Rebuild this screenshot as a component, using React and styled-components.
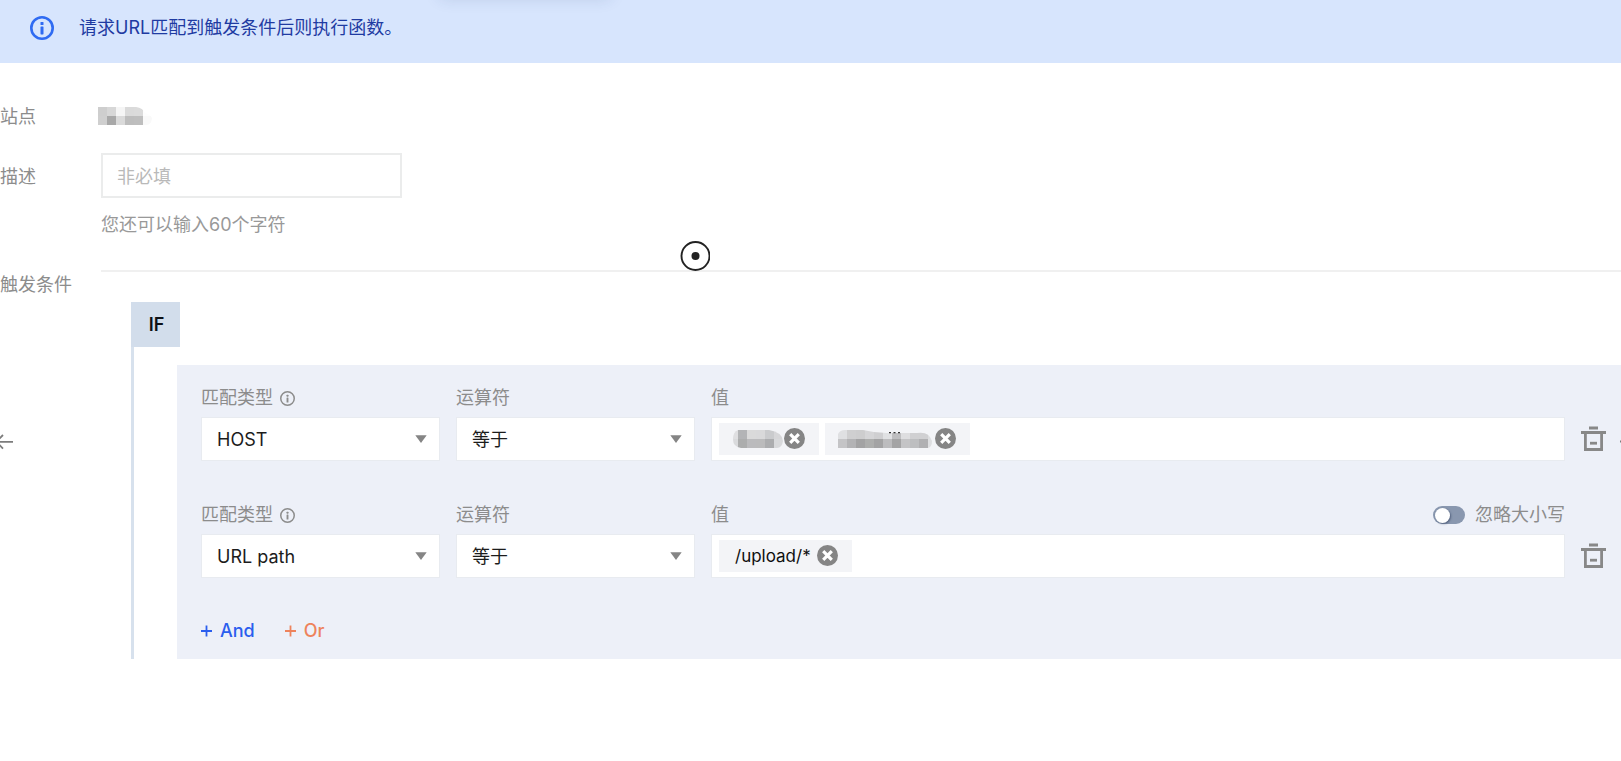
import React, { useState } from 'react';
import styled, { createGlobalStyle } from 'styled-components';

const GlobalStyle = createGlobalStyle`
    * {
        box-sizing: border-box;
    }

    body {
        margin: 0;
        background-color: #fff;
    }

    body, button, input, select {
        font-family: Inter, "Noto Sans CJK SC", sans-serif;
        font-size: 18px;
        line-height: 24px;
    }
`;

const Page = styled.main`
    position: relative;
    min-height: 100vh;
    overflow: hidden;
    color: #8c8c8c;
`;

/* only the shadow of the message reaches into the page */
const TopMessage = styled.div`
    position: absolute;
    top: -22px;
    left: 440px;
    width: 170px;
    height: 20px;
    box-shadow: 0 0 16px rgba(40, 60, 110, 0.16);
`;

const Banner = styled.div`
    display: flex;
    align-items: center;
    gap: 25px;
    padding: 16px 30px 23px;
    background-color: #d7e5fd;
    color: #2f6bf2;
`;

const BannerText = styled.p`
    margin: 0;
    color: #1f3ba2;
`;

const Form = styled.form`
    padding-top: 42px;
`;

const FormRow = styled.div`
    display: grid;
    grid-template-columns: 101px 1fr;
    margin-bottom: ${(props) => props.$space || 0}px;
`;

const RowLabel = styled.label`
    white-space: nowrap;
    padding-top: ${(props) => props.$top || 0}px;
`;

const SiteValue = styled.div`
    display: flex;
    align-items: center;
    margin-left: -3px;
    padding-bottom: 2px;
`;

const Control = styled.div`
    display: flex;
    flex-direction: column;
    align-items: flex-start;
    gap: 15px;
`;

const TextInput = styled.input`
    width: 301px;
    height: 45px;
    padding: 1px 14px 0;
    border: 2px solid #ebecec;
    background-color: #fff;
    color: #1f1f1f;
    outline: none;

    &::placeholder {
        color: #b9b9b9;
        opacity: 1;
    }
`;

const Hint = styled.span`
    color: #999;
`;

const Rules = styled.section`
    border-top: 2px solid #f0f0f0;
    padding: 30px 0 0 30px;
`;

const Branch = styled.div`
    border-left: 3px solid #d7e1ed;
`;

const IfBadge = styled.div`
    display: flex;
    align-items: center;
    justify-content: center;
    width: 49px;
    height: 45px;
    margin-left: -3px;
    margin-bottom: 18px;
    padding-left: 2px;
    background-color: #d2ddeb;
    color: #0d1016;
    font-weight: 600;
`;

const Panel = styled.div`
    display: flex;
    flex-direction: column;
    gap: 41px;
    margin-left: 43px;
    padding: 20px 15px 16px 24px;
    background-color: #edf0f8;
`;

const Condition = styled.div`
    display: grid;
    grid-template-columns: 239px 239px 1fr 25px;
    column-gap: 16px;
    align-items: end;
`;

const Field = styled.div`
    display: flex;
    flex-direction: column;
    gap: 7px;
    min-width: 0;
`;

const FieldHead = styled.div`
    display: flex;
    align-items: center;
    justify-content: space-between;
    height: 25px;
    padding-top: 1px;
`;

const FieldLabel = styled.label`
    display: flex;
    align-items: center;
    gap: 7px;
`;

const SelectBox = styled.div`
    position: relative;

    svg {
        position: absolute;
        top: 18px;
        right: 13px;
        pointer-events: none;
    }
`;

const Select = styled.select`
    display: block;
    width: 100%;
    height: 44px;
    padding: 1px 32px 0 15px;
    border: 1px solid #e8ebf0;
    border-radius: 0;
    background-color: #fff;
    color: #1c1c1c;
    appearance: none;
    outline: none;
`;

const ValueBox = styled.div`
    display: flex;
    align-items: center;
    gap: 6px;
    height: 44px;
    padding: 0 7px;
    border: 1px solid #e8ebf0;
    background-color: #fff;
`;

const Tag = styled.span`
    display: flex;
    align-items: center;
    gap: 4px;
    height: 32px;
    padding: 0 14px 1px;
    background-color: #f3f4f7;
    color: #0f0f0f;
    font-size: 17px;
`;

const TagText = styled.span`
    padding: 1px 2px 0;
`;

const IconButton = styled.button`
    display: flex;
    align-items: center;
    justify-content: center;
    height: ${(props) => props.$height}px;
    padding: 0;
    border: none;
    background: none;
    color: #888;
    cursor: pointer;
`;

const TagInput = styled.input`
    flex: 1;
    min-width: 0;
    height: 32px;
    border: none;
    background: transparent;
    outline: none;
`;

const SwitchLabel = styled.label`
    display: flex;
    align-items: center;
    gap: 10px;
`;

const Switch = styled.input`
    display: flex;
    align-items: center;
    width: 32px;
    height: 18px;
    margin: 0;
    padding: 0 2px;
    border-radius: 9px;
    background-color: ${(props) => (props.checked ? '#2b62f0' : '#8997af')};
    justify-content: ${(props) => (props.checked ? 'flex-end' : 'flex-start')};
    appearance: none;

    &::before {
        content: '';
        width: 15px;
        height: 15px;
        border-radius: 50%;
        background-color: #fff;
        box-shadow: 1px 1px 2px rgba(30, 45, 80, 0.5);
    }
`;

const Actions = styled.div`
    display: flex;
    gap: 30px;
`;

const AddButton = styled.button`
    display: flex;
    align-items: center;
    gap: 8px;
    padding: 0;
    border: none;
    background: none;
    color: ${(props) => (props.$kind === 'or' ? '#ee835c' : '#2b5eee')};
    font-weight: 500;
    cursor: pointer;
`;

const Pointer = styled.div`
    position: absolute;
    top: 241px;
    left: 680px;
    width: 30px;
    height: 30px;
`;

const SlideButton = styled.button`
    position: absolute;
    top: 429px;
    ${(props) => props.$side}: ${(props) => props.$offset}px;
    display: flex;
    width: 24px;
    height: 24px;
    padding: 0;
    border: none;
    background: none;
    color: #7c7c7c;
`;

const InfoIcon = ({ size, stroke }) => (
    <svg width={size} height={size} viewBox="0 0 24 24" fill="none" aria-hidden="true">
        <circle cx="12" cy="12" r={12 - stroke / 2} stroke="currentColor" strokeWidth={stroke} />
        <rect x="10.5" y="6" width="3" height="3" rx="0.6" fill="currentColor" />
        <rect x="10.5" y="10.4" width="3" height="8" rx="0.6" fill="currentColor" />
    </svg>
);

const Caret = () => (
    <svg width="12" height="8" viewBox="0 0 12 8" aria-hidden="true">
        <path d="M0.3 0.2h11.4L6 8z" fill="#858585" />
    </svg>
);

const CloseIcon = () => (
    <svg width="21" height="21" viewBox="0 0 21 21" aria-hidden="true">
        <circle cx="10.5" cy="10.5" r="10.5" fill="#858585" />
        <path d="M6.2 6.2l8.6 8.6M14.8 6.2l-8.6 8.6" stroke="#fff" strokeWidth="3.2" />
    </svg>
);

const TrashIcon = () => (
    <svg width="25" height="26" viewBox="0 0 25 26" fill="none" aria-hidden="true">
        <path d="M8 2h9M0 6.5h25" stroke="currentColor" strokeWidth="2.8" />
        <path d="M4.4 7v16.5h16.2V7" stroke="currentColor" strokeWidth="2.8" />
        <path d="M9 17.2h7" stroke="currentColor" strokeWidth="2.8" />
    </svg>
);

const PlusIcon = () => (
    <svg width="11" height="12" viewBox="0 0 11 12" aria-hidden="true">
        <path d="M0 6h11M5.5 0.5v11" stroke="currentColor" strokeWidth="1.8" />
    </svg>
);

const siteCells = [
    ['#cecece', '#d7d7d7', '#f5f5f5', '#dadada', '#dbdbdb', '#fdfdfd'],
    ['#cfcfcf', '#a8a8a8', '#dadada', '#bdbdbd', '#bebebe', '#f9f9f9'],
];

const hostCells = [
    ['#dfdfe1', '#b3b4b6', '#dadada', '#d9d9da', '#cacbcd', '#d6d6d8'],
    ['#d9dadc', '#acadad', '#bbbbbd', '#bbbbbc', '#acadaf', '#d8d9db'],
];

const domainCells = [
    ['#dfe0e2', '#cfcfd0', '#cdcdce', '#d5d5d7', '#cfcfd1', '#e0e1e3', '#bebec0', '#dedee0', '#d0d0d2', '#d0d0d2', '#dcdddf'],
    ['#c4c4c6', '#b3b3b5', '#a3a3a4', '#adaead', '#a3a3a4', '#bcbcbe', '#a4a4a5', '#c4c4c6', '#bdbec0', '#b0b0b2', '#dedfe1'],
];

/* masked value, drawn as blocks of 9px inside a rounded outline */
const Mosaic = ({ id, cells, width, outline, shift = 0, children }) => (
    <svg width={width} height="18" overflow="visible" role="img" aria-label="已隐藏">
        <clipPath id={id}>
            <path d={outline} />
        </clipPath>
        <g clipPath={`url(#${id})`} shapeRendering="crispEdges">
            {cells.map((line, y) =>
                line.map((fill, x) => (
                    <rect key={`${x}-${y}`} x={x * 9 + shift} y={y * 9} width="9" height="9" fill={fill} />
                ))
            )}
        </g>
        {children}
    </svg>
);

const HostMask = () => (
    <Mosaic id="host-mask" cells={hostCells} width={47} shift={-4}
        outline="M5 0H36Q49 2 50 11Q49 18 44 18H8Q0 17 0 9Q0 2 5 0Z" />
);

const DomainMask = () => (
    <Mosaic id="domain-mask" cells={domainCells} width={92} shift={-1}
        outline="M-1 4Q1 0 6 0H24Q36 3 48 3H78Q90 1 93 11Q93 17 89 18H-1Z">
        <path d="M50 2.6h2M54.5 2.6h2M59 2.6h2" stroke="#333" strokeWidth="1.4" />
    </Mosaic>
);

const ConditionRow = ({ id, type, masks, tags, ignoreCase }) => {
    const [checked, setChecked] = useState(false);

    return (
        <Condition>
            <Field>
                <FieldHead>
                    <FieldLabel htmlFor={`${id}-type`}>
                        匹配类型
                        <InfoIcon size={15} stroke={2.4} />
                    </FieldLabel>
                </FieldHead>
                <SelectBox>
                    <Select id={`${id}-type`} defaultValue={type}>
                        <option>HOST</option>
                        <option>URL path</option>
                    </Select>
                    <Caret />
                </SelectBox>
            </Field>
            <Field>
                <FieldHead>
                    <FieldLabel htmlFor={`${id}-operator`}>运算符</FieldLabel>
                </FieldHead>
                <SelectBox>
                    <Select id={`${id}-operator`}>
                        <option>等于</option>
                    </Select>
                    <Caret />
                </SelectBox>
            </Field>
            <Field>
                <FieldHead>
                    <FieldLabel htmlFor={`${id}-value`}>值</FieldLabel>
                    {ignoreCase && (
                        <SwitchLabel>
                            <Switch
                                type="checkbox"
                                role="switch"
                                checked={checked}
                                onChange={(e) => setChecked(e.target.checked)}
                            />
                            忽略大小写
                        </SwitchLabel>
                    )}
                </FieldHead>
                <ValueBox>
                    {masks.map((Mask, index) => (
                        <Tag key={index}>
                            <Mask />
                            <IconButton type="button" $height={21} aria-label="移除">
                                <CloseIcon />
                            </IconButton>
                        </Tag>
                    ))}
                    {tags.map((tag) => (
                        <Tag key={tag}>
                            <TagText>{tag}</TagText>
                            <IconButton type="button" $height={21} aria-label="移除">
                                <CloseIcon />
                            </IconButton>
                        </Tag>
                    ))}
                    <TagInput id={`${id}-value`} type="text" />
                </ValueBox>
            </Field>
            <IconButton type="button" $height={44} aria-label="删除">
                <TrashIcon />
            </IconButton>
        </Condition>
    );
};

export default function App() {
    return (
        <>
            <GlobalStyle />
            <Page>
                <Banner>
                    <InfoIcon size={24} stroke={2.6} />
                    <BannerText>请求URL匹配到触发条件后则执行函数。</BannerText>
                </Banner>
                <TopMessage />

                <Form onSubmit={(e) => e.preventDefault()}>
                    <FormRow $space={24}>
                        <RowLabel as="span">站点</RowLabel>
                        <SiteValue>
                            <Mosaic id="site-mask" cells={siteCells} width={54} outline="M0 0H38Q45 1 47 6Q54 8 54 12Q53 18 48 18H0Z" />
                        </SiteValue>
                    </FormRow>
                    <FormRow $space={33}>
                        <RowLabel htmlFor="description" $top={12}>描述</RowLabel>
                        <Control>
                            <TextInput id="description" type="text" placeholder="非必填" maxLength={60} />
                            <Hint>您还可以输入60个字符</Hint>
                        </Control>
                    </FormRow>
                    <FormRow>
                        <RowLabel as="span" $top={3}>触发条件</RowLabel>
                        <Rules>
                            <Branch>
                                <IfBadge>IF</IfBadge>
                                <Panel>
                                    <ConditionRow id="host" type="HOST" masks={[HostMask, DomainMask]} tags={[]} />
                                    <ConditionRow id="path" type="URL path" masks={[]} tags={['/upload/*']} ignoreCase />
                                    <Actions>
                                        <AddButton type="button" $kind="and">
                                            <PlusIcon />
                                            And
                                        </AddButton>
                                        <AddButton type="button" $kind="or">
                                            <PlusIcon />
                                            Or
                                        </AddButton>
                                    </Actions>
                                </Panel>
                            </Branch>
                        </Rules>
                    </FormRow>
                </Form>

                <Pointer>
                    <svg width="30" height="30" viewBox="0 0 30 30" aria-hidden="true">
                        <circle cx="15.5" cy="15" r="14" fill="#fff" stroke="#222" strokeWidth="1.9" />
                        <circle cx="15.5" cy="15" r="4" fill="#222" />
                    </svg>
                </Pointer>
                <SlideButton type="button" $side="left" $offset={-11} aria-label="上一个">
                    <svg width="24" height="24" viewBox="0 0 24 24" fill="none" aria-hidden="true">
                        <path d="M24 12.8H7M14 6l-6.8 6.8L14 19.6" stroke="currentColor" strokeWidth="1.8" />
                    </svg>
                </SlideButton>
                <SlideButton type="button" $side="right" $offset={-23} aria-label="下一个">
                    <svg width="24" height="24" viewBox="0 0 24 24" fill="none" aria-hidden="true">
                        <path d="M0 12.5h17M10 5.5l7 7-7 7" stroke="currentColor" strokeWidth="1.8" />
                    </svg>
                </SlideButton>
            </Page>
        </>
    );
}
